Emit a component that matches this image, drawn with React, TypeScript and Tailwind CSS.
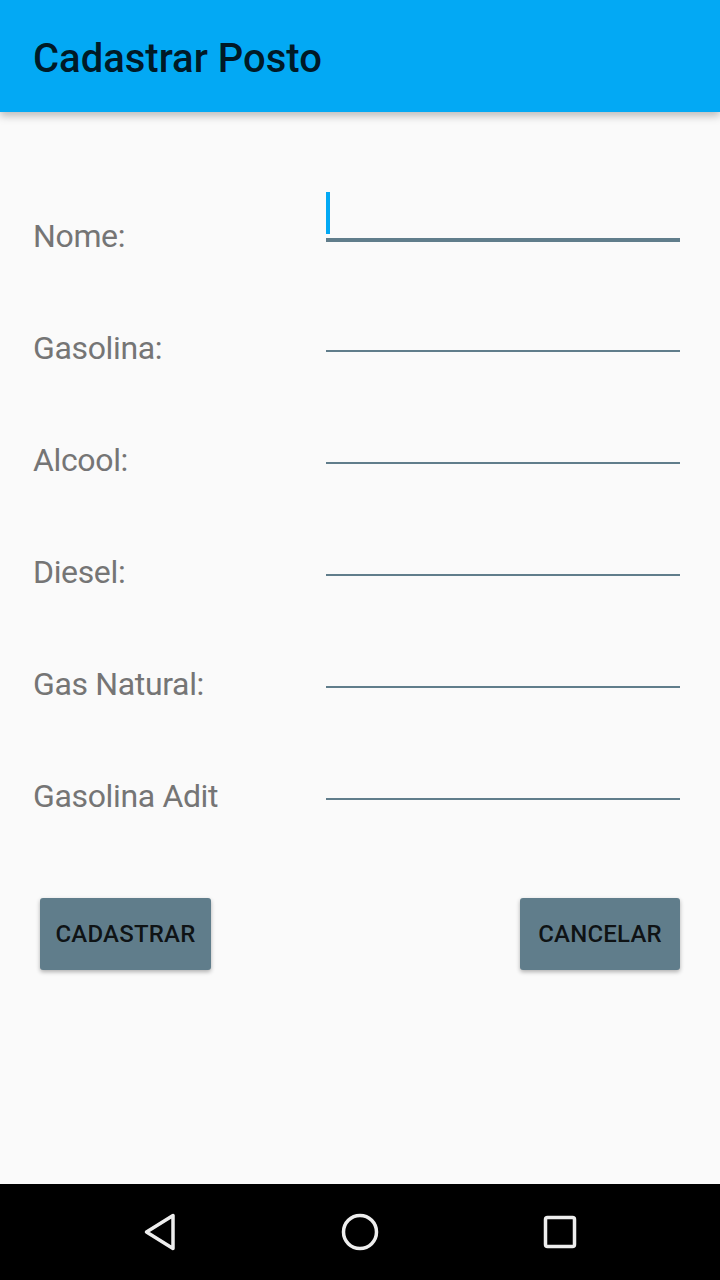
import React from 'react';

const FIELDS = ['Nome:', 'Gasolina:', 'Alcool:', 'Diesel:', 'Gas Natural:', 'Gasolina Adit'];

const FieldRow = ({ label, focused }: { label: string; focused?: boolean }) => {
  return (
    <div className="flex h-[112px] items-start">
      <label className="mt-[80px] w-[293px] shrink-0 text-[32px] leading-[40px] tracking-[-0.35px] text-[#757575]">
        {label}
      </label>
      {focused ? (
        <div className="mt-[56px] h-[50px] w-[354px] border-b-4 border-[#607D8B]">
          <div className="h-[42px] w-[4px] bg-[#03A9F4]" />
        </div>
      ) : (
        <div className="mt-[54px] h-[50px] w-[354px] border-b-2 border-[#607D8B]" />
      )}
    </div>
  );
};

const ActionButton = ({ children, className }: { children: React.ReactNode; className?: string }) => {
  return (
    <button
      className={`flex h-[72px] items-center justify-center rounded-[3px] bg-[#607D8B] text-[24px] font-medium tracking-[0.2px] text-black/85 shadow-[0_2px_4px_rgba(0,0,0,0.3)] ${className}`}
    >
      {children}
    </button>
  );
};

const App = () => {
  return (
    <div className="flex h-[1280px] w-[720px] flex-col bg-[#FAFAFA] font-['Roboto',sans-serif]">
      <header className="relative z-10 flex h-[112px] shrink-0 items-center bg-[#03A9F4] px-[33px] pt-[6px] shadow-[0_4px_8px_rgba(0,0,0,0.25)]">
        <h1 className="text-[40px] font-medium text-black/85">Cadastrar Posto</h1>
      </header>

      <main className="flex-1 pt-[24px] pl-[33px]">
        {FIELDS.map((f, i) => (
          <FieldRow key={f} label={f} focused={i === 0} />
        ))}

        <div className="mt-[90px] flex justify-between pr-[40px] pl-[7px]">
          <ActionButton className="w-[171px]">CADASTRAR</ActionButton>
          <ActionButton className="w-[160px]">CANCELAR</ActionButton>
        </div>
      </main>

      {/* system nav bar */}
      <nav className="flex h-[96px] shrink-0 items-center justify-center gap-[152px] bg-black">
        <svg width="48" height="48" viewBox="0 0 48 48" fill="none">
          <path
            d="M37 7.5 L37 40.5 L10.5 24 Z"
            stroke="#eeeeee"
            strokeWidth="3.5"
            strokeLinejoin="round"
          />
        </svg>
        <svg width="48" height="48" viewBox="0 0 48 48" fill="none">
          <circle cx="24" cy="24" r="16.5" stroke="#eeeeee" strokeWidth="3.5" />
        </svg>
        <svg width="48" height="48" viewBox="0 0 48 48" fill="none">
          <rect x="9.5" y="9.5" width="29" height="29" rx="2" stroke="#eeeeee" strokeWidth="3.5" />
        </svg>
      </nav>
    </div>
  );
};

export default App;
